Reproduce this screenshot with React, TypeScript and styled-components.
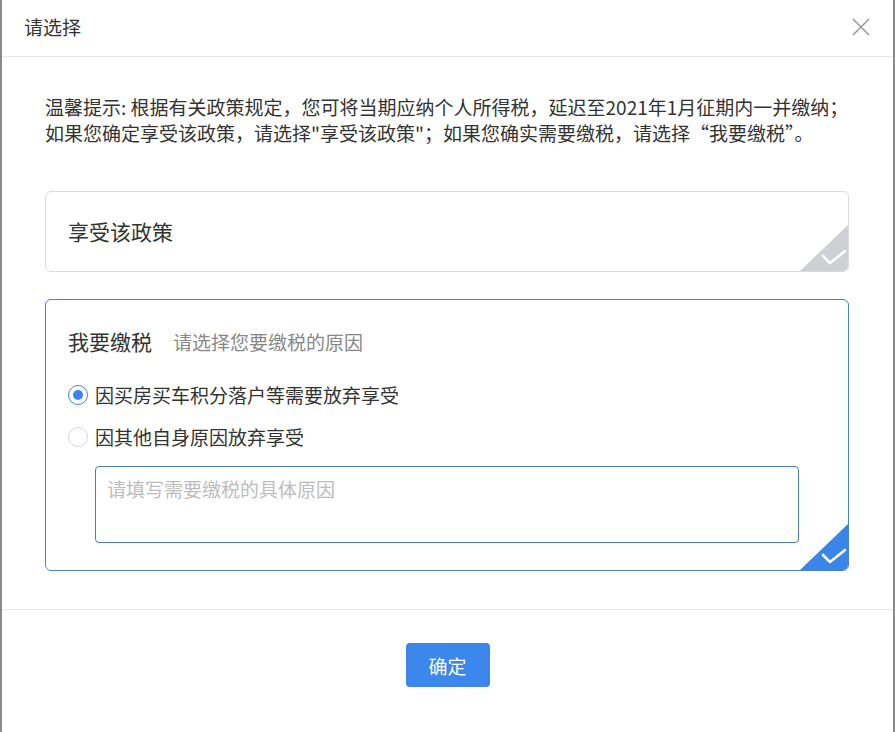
import React, { useState } from 'react'
import styled, { createGlobalStyle } from 'styled-components'

const GlobalStyle = createGlobalStyle`
  html, body {
    margin: 0;
    padding: 0;
    background: #8a8a8a;
    font-family: "Noto Sans CJK SC", "Liberation Sans", sans-serif;
  }
`

type Reason = 'house' | 'other'

const Modal = styled.div`
  margin: 0 2px;
  height: 732px;
  background: #fff;
  display: flex;
  flex-direction: column;
  color: #333;
`

const Header = styled.div`
  height: 56px;
  border-bottom: 1px solid #e6e6e6;
  display: flex;
  align-items: center;
  justify-content: space-between;
  padding: 0 22px 0 22px;
`

const Title = styled.div`
  font-size: 19px;
  line-height: 26px;
  margin-top: -2px;
`

const CloseButton = styled.button`
  border: none;
  background: none;
  padding: 0;
  width: 20px;
  height: 20px;
  cursor: pointer;
  margin-top: -3px;
`

const Body = styled.div`
  padding: 37px 44px 38px 43px;
  display: flex;
  flex-direction: column;
`

const Tip = styled.p`
  margin: 0 0 45px;
  font-size: 19px;
  line-height: 26px;
  color: #333;
`

const Card = styled.div<{ $active?: boolean }>`
  position: relative;
  overflow: hidden;
  display: flex;
  flex-direction: column;
  border: 1px solid ${(p) => (p.$active ? '#4a86c6' : '#dadada')};
  border-radius: 6px;
  padding: ${(p) => (p.$active ? '28px 49px 27px 22px' : '26px 22px 27px 22px')};
  cursor: pointer;
  & + & {
    margin-top: 27px;
  }
`

const CardTitle = styled.span`
  font-size: 21px;
  line-height: 26px;
  color: #333;
`

const CardHead = styled.div`
  display: flex;
  align-items: baseline;
  gap: 21px;
`

const CardHint = styled.span`
  font-size: 19px;
  color: #888;
`

const Options = styled.div`
  margin-top: 27px;
  display: flex;
  flex-direction: column;
  gap: 16px;
`

const Option = styled.label`
  display: flex;
  align-items: center;
  gap: 7px;
  font-size: 19px;
  line-height: 26px;
  color: #333;
  cursor: pointer;
`

const RadioDot = styled.span<{ $checked: boolean }>`
  width: 20px;
  height: 20px;
  box-sizing: border-box;
  border-radius: 50%;
  border: 1px solid ${(p) => (p.$checked ? '#3a86e8' : '#d6d6d6')};
  display: flex;
  align-items: center;
  justify-content: center;
  &::after {
    content: '';
    width: 10px;
    height: 10px;
    border-radius: 50%;
    background: ${(p) => (p.$checked ? '#3a86e8' : 'transparent')};
  }
`

const Reasoning = styled.textarea`
  display: block;
  margin: 16px 0 0 27px;
  height: 77px;
  box-sizing: border-box;
  border: 1px solid #4a7db4;
  border-radius: 4px;
  padding: 9px 11px;
  font-family: inherit;
  font-size: 19px;
  line-height: 26px;
  resize: none;
  outline: none;
  color: #333;
  &::placeholder {
    color: #bdbdbd;
  }
`

const Corner = styled.svg`
  position: absolute;
  right: 0;
  bottom: 0;
`

const Footer = styled.div`
  border-top: 1px solid #e6e6e6;
  padding-top: 33px;
  display: flex;
  justify-content: center;
`

const ConfirmButton = styled.button`
  width: 84px;
  height: 44px;
  border: none;
  border-radius: 4px;
  background: #3c87ec;
  color: #fff;
  font-family: inherit;
  font-size: 19px;
  cursor: pointer;
`

const CornerMark: React.FC<{ color: string }> = ({ color }) => (
  <Corner width="48" height="46" viewBox="0 0 48 46">
    <polygon points="48,0 48,46 0,46" fill={color} />
    <polyline
      points="23,31 30,38 45,26"
      fill="none"
      stroke="#fff"
      strokeWidth="2.6"
      strokeLinecap="round"
      strokeLinejoin="round"
    />
  </Corner>
)

const App: React.FC = () => {
  const [reason, setReason] = useState<Reason>('house')

  return (
    <>
      <GlobalStyle />
      <Modal>
        <Header>
          <Title>请选择</Title>
          <CloseButton aria-label="close">
            <svg width="20" height="20" viewBox="0 0 20 20">
              <path d="M2 2 L18 18 M18 2 L2 18" stroke="#9a9a9a" strokeWidth="1.6" />
            </svg>
          </CloseButton>
        </Header>
        <Body>
          <Tip>
            温馨提示: 根据有关政策规定，您可将当期应纳个人所得税，延迟至2021年1月征期内一并缴纳；
            <br />
            如果您确定享受该政策，请选择"享受该政策"；如果您确实需要缴税，请选择“我要缴税”。
          </Tip>
          <Card>
            <CardTitle>享受该政策</CardTitle>
            <CornerMark color="#cfd0d3" />
          </Card>
          <Card $active>
            <CardHead>
              <CardTitle>我要缴税</CardTitle>
              <CardHint>请选择您要缴税的原因</CardHint>
            </CardHead>
            <Options>
              <Option onClick={() => setReason('house')}>
                <RadioDot $checked={reason === 'house'} />
                因买房买车积分落户等需要放弃享受
              </Option>
              <Option onClick={() => setReason('other')}>
                <RadioDot $checked={reason === 'other'} />
                因其他自身原因放弃享受
              </Option>
            </Options>
            <Reasoning placeholder="请填写需要缴税的具体原因" />
            <CornerMark color="#3a86e8" />
          </Card>
        </Body>
        <Footer>
          <ConfirmButton>确定</ConfirmButton>
        </Footer>
      </Modal>
    </>
  )
}

export default App
